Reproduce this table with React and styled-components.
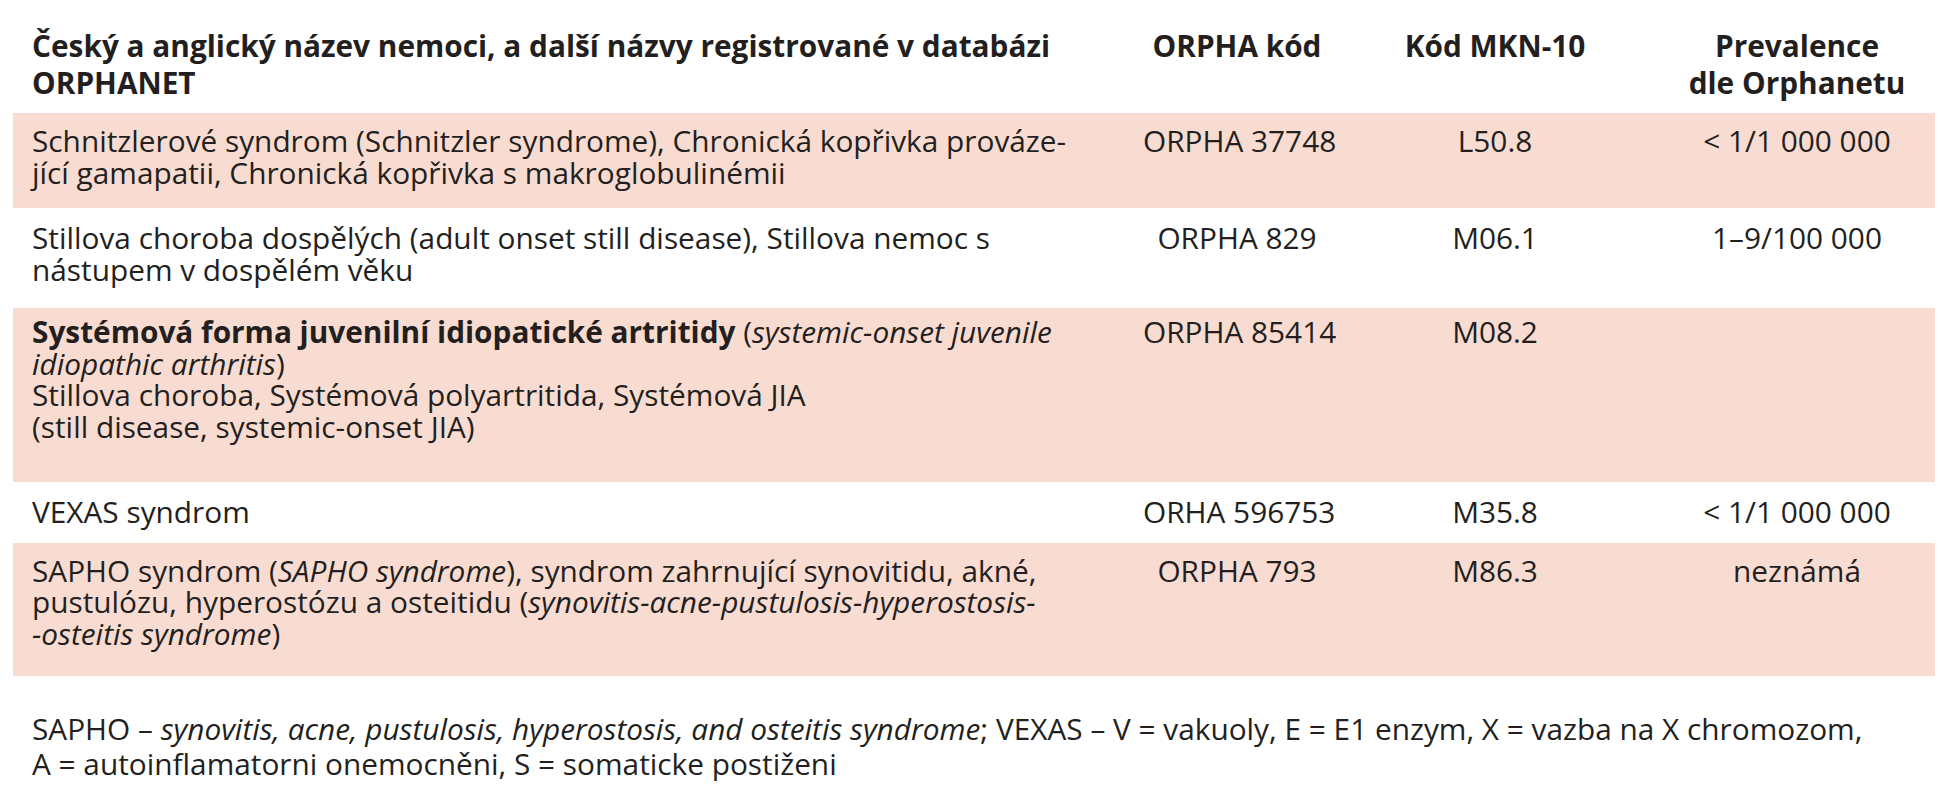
import React from "react";
import styled, { createGlobalStyle } from "styled-components";

const GlobalStyle = createGlobalStyle`
  html, body {
    margin: 0;
    padding: 0;
    background: #ffffff;
  }
  body {
    font-family: "Open Sans", "Noto Sans", sans-serif;
    color: #231f20;
  }
`;

const Page = styled.div`
  width: 1941px;
  padding: 27px 6px 0 13px;
  box-sizing: border-box;
`;

const Table = styled.div`
  width: 1922px;
  display: flex;
  flex-direction: column;
`;

const Grid = styled.div`
  display: grid;
  grid-template-columns: 1130px 188px 328px 276px;
`;

const HeaderRow = styled(Grid)`
  font-weight: 700;
  font-size: 29.8px;
  line-height: 37px;
  padding-bottom: 12px;
`;

const BodyRow = styled(Grid)`
  background: ${(p) => (p.$shaded ? "#f9dcd1" : "transparent")};
  font-size: 29.8px;
  line-height: 31.5px;
  padding-top: ${(p) => p.$pt}px;
  padding-bottom: ${(p) => p.$pb}px;
`;

const NameCell = styled.div`
  padding-left: 19px;
  padding-right: 10px;
  white-space: nowrap;
`;

const CodeCell = styled.div`
  text-align: center;
  white-space: nowrap;
`;

const Em = styled.i`
  font-style: italic;
`;

const Strong = styled.b`
  font-weight: 700;
`;

const Footnote = styled.p`
  margin: 35px 0 0 0;
  padding-left: 19px;
  font-size: 29.8px;
  line-height: 35px;
  white-space: nowrap;
`;

const rows = [
  {
    shaded: true,
    pt: 12,
    pb: 20,
    name: (
      <>
        Schnitzlerové syndrom (Schnitzler syndrome), Chronická kopřivka prováze-
        <br />
        jící gamapatii, Chronická kopřivka s makroglobulinémii
      </>
    ),
    orpha: "ORPHA 37748",
    mkn: "L50.8",
    prev: "< 1/1 000 000",
  },
  {
    shaded: false,
    pt: 14,
    pb: 23,
    name: (
      <>
        Stillova choroba dospělých (adult onset still disease), Stillova nemoc s
        <br />
        nástupem v dospělém věku
      </>
    ),
    orpha: "ORPHA 829",
    mkn: "M06.1",
    prev: "1–9/100 000",
  },
  {
    shaded: true,
    pt: 8,
    pb: 40,
    name: (
      <>
        <Strong>Systémová forma juvenilní idiopatické artritidy</Strong> (<Em>systemic-onset juvenile</Em>
        <br />
        <Em>idiopathic arthritis</Em>)
        <br />
        Stillova choroba, Systémová polyartritida, Systémová JIA
        <br />
        (still disease, systemic-onset JIA)
      </>
    ),
    orpha: "ORPHA 85414",
    mkn: "M08.2",
    prev: "",
  },
  {
    shaded: false,
    pt: 14,
    pb: 15,
    name: <>VEXAS syndrom</>,
    orpha: "ORHA 596753",
    mkn: "M35.8",
    prev: "< 1/1 000 000",
  },
  {
    shaded: true,
    pt: 12,
    pb: 27,
    name: (
      <>
        SAPHO syndrom (<Em>SAPHO syndrome</Em>), syndrom zahrnující synovitidu, akné,
        <br />
        pustulózu, hyperostózu a osteitidu (<Em>synovitis-acne-pustulosis-hyperostosis-</Em>
        <br />
        <Em>-osteitis syndrome</Em>)
      </>
    ),
    orpha: "ORPHA 793",
    mkn: "M86.3",
    prev: "neznámá",
  },
];

export default function App() {
  return (
    <>
      <GlobalStyle />
      <Page>
        <Table>
          <HeaderRow>
            <NameCell>
              Český a anglický název nemoci, a další názvy registrované v databázi
              <br />
              ORPHANET
            </NameCell>
            <CodeCell>ORPHA kód</CodeCell>
            <CodeCell>Kód MKN-10</CodeCell>
            <CodeCell>
              Prevalence
              <br />
              dle Orphanetu
            </CodeCell>
          </HeaderRow>
          {rows.map((r, i) => (
            <BodyRow key={i} $shaded={r.shaded} $pt={r.pt} $pb={r.pb}>
              <NameCell>{r.name}</NameCell>
              <CodeCell>{r.orpha}</CodeCell>
              <CodeCell>{r.mkn}</CodeCell>
              <CodeCell>{r.prev}</CodeCell>
            </BodyRow>
          ))}
        </Table>
        <Footnote>
          SAPHO – <Em>synovitis, acne, pustulosis, hyperostosis, and osteitis syndrome</Em>; VEXAS – V = vakuoly, E = E1 enzym, X = vazba na X chromozom,
          <br />
          A = autoinflamatorni onemocněni, S = somaticke postiženi
        </Footnote>
      </Page>
    </>
  );
}
